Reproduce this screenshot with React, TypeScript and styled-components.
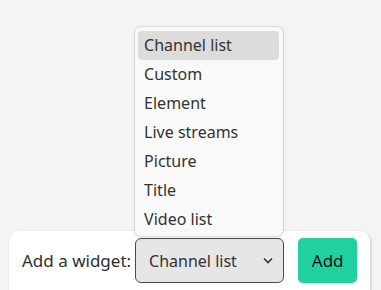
import React from "react";
import styled, { createGlobalStyle } from "styled-components";

const Global = createGlobalStyle`
  html, body { margin: 0; padding: 0; background: #f4f4f4; }
  body { font-family: "Noto Sans", "Open Sans", sans-serif; color: #2b2b2b; }
`;

const Page = styled.div`
  height: 290px;
  display: flex;
  flex-direction: column;
  justify-content: flex-end;
  overflow: hidden;
`;

const Card = styled.div`
  margin-left: 9px;
  width: 361px;
  box-sizing: border-box;
  background: #ffffff;
  border-radius: 11px 11px 0 0;
  box-shadow: 1px 1px 3px rgba(0, 0, 0, 0.18);
  padding: 7px 13px 7px 13px;
  display: flex;
  align-items: center;
`;

const Label = styled.span`
  font-size: 17px;
  color: #2e2e2e;
  margin-right: 4px;
  white-space: nowrap;
`;

const SelectWrap = styled.div`
  position: relative;
  width: 150px;
  height: 45px;
  margin-right: 14px;
`;

const NativeSelect = styled.select`
  appearance: none;
  -webkit-appearance: none;
  width: 100%;
  height: 100%;
  box-sizing: border-box;
  background: #e6e6e6;
  border: 1px solid #4a4a4a;
  border-radius: 6px;
  padding: 0 0 0 13px;
  font-family: inherit;
  font-size: 16px;
  color: #333;
  outline: none;
`;

const Chevron = styled.svg`
  position: absolute;
  right: 11px;
  top: 19px;
  width: 10px;
  height: 7px;
  pointer-events: none;
`;

const Menu = styled.ul`
  position: absolute;
  left: 0;
  bottom: calc(100% + 2px);
  width: 148px;
  box-sizing: border-box;
  margin: 0;
  padding: 4px 4px 2px 3px;
  list-style: none;
  background: #f9f9f9;
  border-radius: 6px;
  box-shadow: 0 0 0 1px rgba(0, 0, 0, 0.08), 0 1px 4px rgba(0, 0, 0, 0.12);
`;

const Item = styled.li<{ $active?: boolean }>`
  height: 29px;
  line-height: 29px;
  padding-left: 6px;
  font-size: 16px;
  color: #333;
  border-radius: 4px;
  background: ${(p) => (p.$active ? "#dcdcdc" : "transparent")};
  white-space: nowrap;
`;

const AddButton = styled.button`
  width: 59px;
  height: 45px;
  border: none;
  border-radius: 5px;
  background: #20d0a0;
  color: #111;
  font-family: inherit;
  font-size: 17px;
  padding: 0;
`;

const options = [
  "Channel list",
  "Custom",
  "Element",
  "Live streams",
  "Picture",
  "Title",
  "Video list",
];

export default function App() {
  return (
    <>
      <Global />
      <Page>
        <Card>
          <Label>Add a widget:</Label>
          <SelectWrap>
            <NativeSelect defaultValue="Channel list">
              {options.map((o) => (
                <option key={o}>{o}</option>
              ))}
            </NativeSelect>
            <Chevron viewBox="0 0 10 7">
              <path d="M1 1.5 L5 5.5 L9 1.5" fill="none" stroke="#333" strokeWidth="1.6" />
            </Chevron>
            <Menu>
              {options.map((o, i) => (
                <Item key={o} $active={i === 0}>
                  {o}
                </Item>
              ))}
            </Menu>
          </SelectWrap>
          <AddButton>Add</AddButton>
        </Card>
      </Page>
    </>
  );
}
